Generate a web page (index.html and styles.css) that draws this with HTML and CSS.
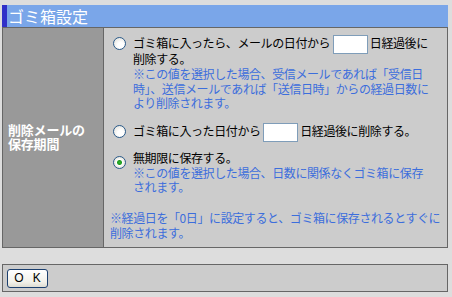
FILE: index.html
```html
<!DOCTYPE html>
<html>
<head>
    <meta charset="utf-8">
    <title>ゴミ箱設定</title>
    <link rel="stylesheet" href="styles.css">
</head>
<body>
    <div class="title">ゴミ箱設定</div>
    <div class="tbl">
        <div class="label">削除メールの<br>保存期間</div>
        <div class="cell">
            <div class="opt">
                <input type="radio" name="keep" class="radio">
                <div class="txt">
                    <div class="line">ゴミ箱に入ったら、メールの日付から <input type="text" class="days"> 日経過後に<br>削除する。</div>
                    <div class="note">※この値を選択した場合、受信メールであれば「受信日<br>時」、送信メールであれば「送信日時」からの経過日数に<br>より削除されます。</div>
                </div>
            </div>
            <div class="opt opt2">
                <input type="radio" name="keep" class="radio">
                <div class="txt">
                    <div class="line">ゴミ箱に入った日付から <input type="text" class="days"> 日経過後に削除する。</div>
                </div>
            </div>
            <div class="opt opt3">
                <input type="radio" name="keep" class="radio low" checked>
                <div class="txt">
                    <div class="line">無期限に保存する。</div>
                    <div class="note">※この値を選択した場合、日数に関係なくゴミ箱に保存<br>されます。</div>
                </div>
            </div>
            <div class="note foot">※経過日を「0日」に設定すると、ゴミ箱に保存されるとすぐに<br>削除されます。</div>
        </div>
    </div>
    <div class="bar">
        <button class="ok">O K</button>
    </div>
</body>
</html>
```

FILE: styles.css
```css
body{
    margin: 0;
    background-color: #dddddd;
    font-family: "Noto Sans CJK JP", "DejaVu Sans", sans-serif;
    font-size: 12px;
}
.title{
    margin: 5px 0 0 2px;
    width: 440px;
    height: 22px;
    line-height: 22px;
    padding-left: 1px;
    border-left: 5px solid #3030c8;
    background-color: #7aa6e9;
    color: #ffffff;
    font-size: 16px;
}
.tbl{
    display: flex;
    margin-left: 2px;
    width: 444px;
    border: 1px solid #666666;
}
.label{
    width: 95px;
    padding-left: 5px;
    border-right: 1px solid #666666;
    background-color: #999999;
    color: #ffffff;
    font-weight: bold;
    font-size: 13px;
    line-height: 14px;
    letter-spacing: -0.2px;
    display: flex;
    align-items: center;
}
.cell{
    flex: 1;
    background-color: #cccccc;
    padding: 7px 0 7px 6px;
    white-space: nowrap;
    letter-spacing: -0.4px;
}
.opt{
    display: flex;
}
.opt2{
    margin-top: 12px;
}
.opt3{
    margin-top: 11px;
}
.radio{
    appearance: none;
    box-sizing: border-box;
    width: 13px;
    height: 13px;
    margin: 2px 7px 0 3px;
    border: 1px solid #2a5a8a;
    border-radius: 50%;
    background: radial-gradient(circle at 60% 65%, #ffffff 30%, #dcdad2 100%);
    flex: none;
}
.radio.low{
    margin-top: 6px;
}
.radio:checked{
    background: radial-gradient(circle, #2fb82f 0, #1e9a1e 2px, #ffffff 3px, #f4f3ee 50%, #d8d5cc 100%);
}
.line{
    line-height: 16px;
    color: #000000;
}
.days{
    width: 33px;
    height: 17px;
    margin: -3px 0;
    padding: 0;
    border: 1px solid #7f9db9;
    background-color: #ffffff;
    vertical-align: middle;
    box-sizing: content-box;
}
.note{
    color: #3c6edc;
    line-height: 14.5px;
}
.foot{
    margin-top: 15px;
    line-height: 15px;
}
.bar{
    margin: 16px 0 0 2px;
    width: 440px;
    height: 26px;
    padding-left: 4px;
    border: 1px solid #666666;
    background-color: #cccccc;
}
.ok{
    margin-top: 4px;
    width: 41px;
    height: 19px;
    padding: 0 0 0 3px;
    border: 1px solid #1c3f6e;
    border-radius: 3px;
    background: linear-gradient(#ffffff, #f2f1ea 70%, #dedcd2);
    font-family: "Liberation Sans", sans-serif;
    font-size: 12px;
    letter-spacing: 3px;
    text-align: center;
    color: #000000;
    display: block;
}
```
